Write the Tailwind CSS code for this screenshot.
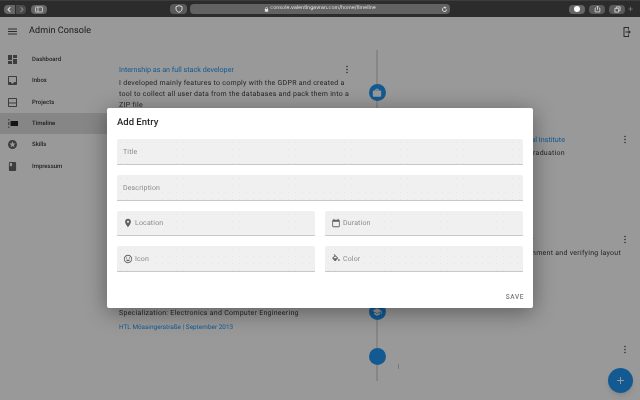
<!DOCTYPE html>
<html lang="en">
<head>
<meta charset="UTF-8">
<title>Admin Console</title>
<script src="https://cdn.jsdelivr.net/npm/@tailwindcss/browser@4"></script>
</head>
<body class="w-[640px] h-[400px] overflow-hidden bg-white font-['Roboto',sans-serif]">
<div class="relative w-[640px] h-[400px] overflow-hidden flex flex-col bg-white blur-[0.3px] [text-rendering:geometricPrecision]">

  <!-- Browser toolbar -->
  <div class="h-[17px] shrink-0 bg-[#2c2c2c] border-t border-[#3c3c3c] flex items-center text-[#d8d8d8]">
    <div class="ml-[4px] w-[11px] h-[9px] bg-[#666] rounded-l-sm flex items-center justify-center">
      <svg class="w-[7px] h-[7px]" viewBox="0 0 24 24" fill="none" stroke="currentColor" stroke-width="4"><path d="M15 4l-8 8 8 8"/></svg>
    </div>
    <div class="ml-px w-[10px] h-[9px] bg-[#4c4c4c] rounded-r-sm flex items-center justify-center text-[#888]">
      <svg class="w-[7px] h-[7px]" viewBox="0 0 24 24" fill="none" stroke="currentColor" stroke-width="4"><path d="M9 4l8 8-8 8"/></svg>
    </div>
    <div class="ml-[5px] w-[16px] h-[9px] bg-[#666] rounded-sm flex items-center justify-center">
      <svg class="w-[8px] h-[7px]" viewBox="0 0 16 12" fill="none" stroke="currentColor" stroke-width="1.6"><rect x="1" y="1" width="14" height="10" rx="1"/><path d="M6 1v10"/></svg>
    </div>
    <div class="ml-[123px] w-[17px] h-[10px] bg-[#5a5a5a] rounded-sm flex items-center justify-center">
      <svg class="w-[8px] h-[8px]" viewBox="0 0 24 24" fill="none" stroke="currentColor" stroke-width="3"><path d="M12 2l9 3v7c0 5-4 8-9 10-5-2-9-5-9-10V5z"/></svg>
    </div>
    <div class="relative ml-[3px] w-[260px] h-[10px] bg-[#626262] rounded-sm flex items-center justify-center text-[5.2px] text-[#e4e4e4] font-['Inter',sans-serif]">
      <svg class="w-[5px] h-[5px] mr-[1px]" viewBox="0 0 24 24" fill="currentColor"><path d="M6 10V7a6 6 0 0 1 12 0v3h2v13H4V10zm3 0h6V7a3 3 0 0 0-6 0z"/></svg>
      <span>console.valentingavran.com/home/timeline</span>
      <svg class="absolute right-[2px] w-[7px] h-[7px]" viewBox="0 0 24 24" fill="none" stroke="currentColor" stroke-width="3"><path d="M19 12a7 7 0 1 1-3-5.7M14 2l3 4-4 2"/></svg>
    </div>
    <div class="ml-[119px] w-[16px] h-[9px] bg-[#666] rounded-sm flex items-center justify-center">
      <div class="w-[6px] h-[6px] rounded-full bg-white"></div>
    </div>
    <div class="ml-[4px] w-[16px] h-[9px] bg-[#5a5a5a] rounded-sm flex items-center justify-center">
      <svg class="w-[7px] h-[8px]" viewBox="0 0 24 24" fill="none" stroke="currentColor" stroke-width="3"><path d="M7 9H4v13h16V9h-3M12 15V2M8 6l4-4 4 4"/></svg>
    </div>
    <div class="ml-[4px] w-[16px] h-[9px] bg-[#5a5a5a] rounded-sm flex items-center justify-center">
      <svg class="w-[7px] h-[7px]" viewBox="0 0 24 24" fill="none" stroke="currentColor" stroke-width="3"><path d="M8 8V3h13v13h-5M3 8h13v13H3z"/></svg>
    </div>
    <span class="ml-[3px] text-[9px] leading-none font-light text-[#999] mt-[3px]">+</span>
  </div>

  <!-- App header -->
  <header class="h-[32px] shrink-0 flex items-center pl-[8px] pr-[7px] pb-[3px] text-black/70">
    <svg class="w-[9px] h-[7px]" viewBox="0 0 18 12" fill="currentColor"><path d="M0 12h18v-2H0zm0-5h18V5H0zm0-7v2h18V0z"/></svg>
    <h1 class="ml-[12px] text-[9px] tracking-[0.1px] text-black/85">Admin Console</h1>
    <svg class="ml-auto w-[12px] h-[12px]" viewBox="0 0 24 24" fill="currentColor"><path d="M5 2h11v5h-2V4H7v16h7v-3h2v5H5zM15 7.5l4.5 4.5-4.5 4.5V13h-6v-2h6z"/></svg>
  </header>

  <div class="flex flex-1 min-h-0">
    <!-- Sidebar -->
    <nav class="w-[107px] shrink-0 text-[6px] font-medium text-black/80">
      <a class="flex items-center h-[21.33px] pl-[8px] gap-[15px]">
        <svg class="w-[9px] h-[9px] text-black/60" viewBox="3 3 18 18" fill="currentColor"><path d="M3 13h8V3H3v10zm0 8h8v-6H3v6zm10 0h8V11h-8v10zm0-18v6h8V3h-8z"/></svg>Dashboard
      </a>
      <a class="flex items-center h-[21.33px] pl-[8px] gap-[15px]">
        <svg class="w-[9px] h-[9px] text-black/60" viewBox="3 3 18 18" fill="currentColor"><path d="M19 3H4.99c-1.11 0-1.98.89-1.98 2L3 19c0 1.1.88 2 1.99 2H19c1.1 0 2-.9 2-2V5c0-1.11-.9-2-2-2zm0 12h-4c0 1.66-1.35 3-3 3s-3-1.34-3-3H4.99V5H19v10z"/></svg>Inbox
      </a>
      <a class="flex items-center h-[21.33px] pl-[8px] gap-[15px]">
        <svg class="w-[9px] h-[9px] text-black/60" viewBox="3 3 18 18" fill="currentColor"><path d="M19 3H5c-1.1 0-2 .9-2 2v14c0 1.1.9 2 2 2h14c1.1 0 2-.9 2-2V5c0-1.1-.9-2-2-2zm0 16H5v-5h14zm0-7H5V5h14z"/></svg>Projects
      </a>
      <a class="flex items-center h-[21.33px] pl-[8px] gap-[15px] bg-[#e0e0e0]">
        <svg class="w-[10px] h-[9px] text-black/85" viewBox="0 0 20 18" fill="currentColor"><path d="M5 4h15v10H5zM1 0h1.5v3H1zm0 6h1.5v6H1zm0 9h1.5v3H1z"/></svg><span class="-ml-px">Timeline</span>
      </a>
      <a class="flex items-center h-[21.33px] pl-[8px] gap-[15px]">
        <svg class="w-[9px] h-[9px] text-black/60" viewBox="2 2 20 20" fill="currentColor"><path d="M11.99 2C6.47 2 2 6.48 2 12s4.47 10 9.99 10C17.52 22 22 17.52 22 12S17.52 2 11.99 2zm4.24 16L12 15.45 7.77 18l1.12-4.81-3.73-3.23 4.92-.42L12 5l1.92 4.53 4.92.42-3.73 3.23L16.23 18z"/></svg>Skills
      </a>
      <a class="flex items-center h-[21.33px] pl-[8px] gap-[15px]">
        <svg class="w-[9px] h-[9px] text-black/60" viewBox="4 2 16 20" fill="currentColor"><path d="M18 2H6c-1.1 0-2 .9-2 2v16c0 1.1.9 2 2 2h12c1.1 0 2-.9 2-2V4c0-1.1-.9-2-2-2zM6 4h5v8l-2.5-1.5L6 12V4z"/></svg>Impressum
      </a>
    </nav>

    <!-- Timeline -->
    <main class="relative flex-1 pl-[12px] pt-[14px] text-[7px] leading-[11px] tracking-[0.27px] text-black/80">
      <div class="absolute left-[269px] top-[1px] w-[2px] h-[331px] bg-[#e0e0e0]"></div>

      <div class="relative grid grid-cols-[232px_52px_228px] h-[70px]">
        <div>
          <div class="flex justify-between items-center h-[13px]">
            <span class="text-[7.2px] text-[#2196f3] tracking-normal">Internship as an full stack developer</span>
            <svg class="w-[8px] h-[9px] text-black/70" viewBox="0 0 8 12" fill="currentColor"><circle cx="4" cy="2" r="1.1"/><circle cx="4" cy="6" r="1.1"/><circle cx="4" cy="10" r="1.1"/></svg>
          </div>
          <p class="mt-[2px] w-[240px]">I developed mainly features to comply with the GDPR and created a tool to collect all user data from the databases and pack them into a ZIP file</p>
        </div>
        <div class="flex justify-center pt-[21px]">
          <div class="w-[17px] h-[17px] rounded-full bg-[#2196f3] flex items-center justify-center text-white">
            <svg class="w-[10px] h-[10px]" viewBox="0 0 24 24" fill="currentColor"><path d="M20 6h-4V4c0-1.11-.89-2-2-2h-4c-1.11 0-2 .89-2 2v2H4c-1.11 0-1.99.89-1.99 2L2 19c0 1.11.89 2 2 2h16c1.11 0 2-.89 2-2V8c0-1.11-.89-2-2-2zm-6 0h-4V4h4v2z"/></svg>
          </div>
        </div>
      </div>

      <div class="relative grid grid-cols-[232px_52px_228px] h-[100px]">
        <div></div><div></div>
        <div>
          <div class="flex items-center h-[13px]">
            <span class="w-[162px] text-right text-[7.2px] text-[#2196f3] tracking-normal">Higher Technical Institute</span>
            <svg class="ml-auto w-[8px] h-[9px] text-black/70 mr-[2px]" viewBox="0 0 8 12" fill="currentColor"><circle cx="4" cy="2" r="1.1"/><circle cx="4" cy="6" r="1.1"/><circle cx="4" cy="10" r="1.1"/></svg>
          </div>
          <p class="mt-[2px] w-[162px] text-right">Graduation</p>
        </div>
      </div>

      <div class="relative grid grid-cols-[232px_52px_228px] h-[37px]">
        <div></div><div></div>
        <div>
          <div class="flex items-center h-[13px]">
            <span class="w-[131px] text-right text-[7.2px] text-[#2196f3] tracking-normal">Quality Engineer</span>
            <svg class="ml-auto w-[8px] h-[9px] text-black/70 mr-[2px]" viewBox="0 0 8 12" fill="currentColor"><circle cx="4" cy="2" r="1.1"/><circle cx="4" cy="6" r="1.1"/><circle cx="4" cy="10" r="1.1"/></svg>
          </div>
          <p class="mt-[2px] text-right pr-[10px] whitespace-nowrap">Assessing the alignment and verifying layout</p>
        </div>
      </div>

      <div class="relative grid grid-cols-[232px_52px_228px] h-[73px]">
        <div class="pt-[38px]">
          <p class="whitespace-nowrap">Specialization: Electronics and Computer Engineering</p>
          <p class="mt-[3px] text-[6.4px] tracking-[0.03px] text-[#2196f3] whitespace-nowrap">HTL Mössingerstraße | September 2013</p>
        </div>
        <div class="flex justify-center pt-[33px]">
          <div class="w-[17px] h-[17px] rounded-full bg-[#2196f3] flex items-center justify-center text-white">
            <svg class="w-[10px] h-[10px]" viewBox="0 0 24 24" fill="currentColor"><path d="M5 13.18v4L12 21l7-3.82v-4L12 17l-7-3.82zM12 3L1 9l11 6 9-4.91V17h2V9L12 3z"/></svg>
          </div>
        </div>
      </div>

      <div class="relative grid grid-cols-[232px_52px_228px] h-[50px]">
        <div></div>
        <div class="flex justify-center pt-[5px]">
          <div class="w-[17px] h-[17px] rounded-full bg-[#2196f3]"></div>
        </div>
        <div class="flex justify-between items-start pt-[2px]">
          <span class="mt-[19px] ml-[-5px] w-px h-[5px] bg-black/20"></span>
          <svg class="w-[8px] h-[9px] text-black/70 mr-[2px]" viewBox="0 0 8 12" fill="currentColor"><circle cx="4" cy="2" r="1.1"/><circle cx="4" cy="6" r="1.1"/><circle cx="4" cy="10" r="1.1"/></svg>
        </div>
      </div>
    </main>
  </div>

  <!-- FAB -->
  <button class="absolute left-[608px] top-[368px] w-[25px] h-[25px] rounded-full bg-[#2196f3] flex items-center justify-center text-white shadow-md">
    <svg class="w-[7px] h-[7px]" viewBox="0 0 14 14" fill="currentColor"><path d="M14 8H8v6H6V8H0V6h6V0h2v6h6z"/></svg>
  </button>

  <!-- Dialog backdrop -->
  <div class="absolute inset-x-0 bottom-0 top-[17px] bg-black/40"></div>

  <!-- Add Entry dialog -->
  <div class="absolute left-[107px] top-[108px] w-[426px] h-[200px] bg-white rounded-[2px] shadow-[0_4px_22px_rgba(0,0,0,0.4)] px-[10px] flex flex-col">
    <h2 class="mt-[8px] h-[14px] leading-[14px] text-[9.5px] font-medium text-black/85">Add Entry</h2>
    <div class="mt-[9.33px] flex flex-col gap-[10px] text-[7px] text-black/45 tracking-[0.15px]">
      <div class="h-[25.67px] pt-px bg-[#f0f0f0] bg-[radial-gradient(#e6e6e6_0.5px,transparent_0.7px)] bg-[length:7px_7px] border-b border-[#c8c8c8] rounded-t-[2px] flex items-center px-[6px]"><span class="bg-[#f0f0f0]">Title</span></div>
      <div class="h-[25.67px] pt-px bg-[#f0f0f0] bg-[radial-gradient(#e6e6e6_0.5px,transparent_0.7px)] bg-[length:7px_7px] border-b border-[#c8c8c8] rounded-t-[2px] flex items-center px-[6px]"><span class="bg-[#f0f0f0]">Description</span></div>
      <div class="grid grid-cols-2 gap-x-[10px] gap-y-[10px]">
        <div class="h-[25.67px] pt-px bg-[#f0f0f0] bg-[radial-gradient(#e6e6e6_0.5px,transparent_0.7px)] bg-[length:7px_7px] border-b border-[#c8c8c8] rounded-t-[2px] flex items-center px-[6px] gap-[2px]">
          <svg class="w-[10px] h-[10px] text-black/60" viewBox="0 0 24 24" fill="currentColor"><path d="M12 2C8.13 2 5 5.13 5 9c0 5.25 7 13 7 13s7-7.75 7-13c0-3.87-3.13-7-7-7zm0 9.5c-1.38 0-2.5-1.12-2.5-2.5s1.12-2.5 2.5-2.5 2.5 1.12 2.5 2.5-1.12 2.5-2.5 2.5z"/></svg><span class="bg-[#f0f0f0]">Location</span>
        </div>
        <div class="h-[25.67px] pt-px bg-[#f0f0f0] bg-[radial-gradient(#e6e6e6_0.5px,transparent_0.7px)] bg-[length:7px_7px] border-b border-[#c8c8c8] rounded-t-[2px] flex items-center px-[6px] gap-[2px]">
          <svg class="w-[10px] h-[10px] text-black/60" viewBox="0 0 24 24" fill="currentColor"><path d="M19 4h-1V2h-2v2H8V2H6v2H5c-1.11 0-1.99.9-1.99 2L3 20c0 1.1.89 2 2 2h14c1.1 0 2-.9 2-2V6c0-1.1-.9-2-2-2zm0 16H5V9h14v11z"/></svg><span class="bg-[#f0f0f0]">Duration</span>
        </div>
        <div class="h-[25.67px] pt-px bg-[#f0f0f0] bg-[radial-gradient(#e6e6e6_0.5px,transparent_0.7px)] bg-[length:7px_7px] border-b border-[#c8c8c8] rounded-t-[2px] flex items-center px-[6px] gap-[2px]">
          <svg class="w-[10px] h-[10px] text-black/60" viewBox="0 0 24 24" fill="currentColor"><path d="M11.99 2C6.47 2 2 6.48 2 12s4.47 10 9.99 10C17.52 22 22 17.52 22 12S17.52 2 11.99 2zM12 20c-4.42 0-8-3.58-8-8s3.58-8 8-8 8 3.58 8 8-3.58 8-8 8zm3.5-9c.83 0 1.5-.67 1.5-1.5S16.33 8 15.5 8 14 8.67 14 9.5s.67 1.5 1.5 1.5zm-7 0c.83 0 1.5-.67 1.5-1.5S9.33 8 8.5 8 7 8.67 7 9.5 7.67 11 8.5 11zm3.5 6.5c2.33 0 4.31-1.46 5.11-3.5H6.89c.8 2.04 2.78 3.5 5.11 3.5z"/></svg><span class="bg-[#f0f0f0]">Icon</span>
        </div>
        <div class="h-[25.67px] pt-px bg-[#f0f0f0] bg-[radial-gradient(#e6e6e6_0.5px,transparent_0.7px)] bg-[length:7px_7px] border-b border-[#c8c8c8] rounded-t-[2px] flex items-center px-[6px] gap-[2px]">
          <svg class="w-[10px] h-[10px] text-black/60" viewBox="0 0 24 24" fill="currentColor"><path d="M16.56 8.94L7.62 0 6.21 1.41l2.38 2.38-5.15 5.15c-.59.59-.59 1.54 0 2.12l5.5 5.5c.29.29.68.44 1.06.44s.77-.15 1.06-.44l5.5-5.5c.59-.58.59-1.53 0-2.12zM5.21 10L10 5.21 14.79 10H5.21zM19 11.5s-2 2.17-2 3.5c0 1.1.9 2 2 2s2-.9 2-2c0-1.33-2-3.5-2-3.5z"/></svg><span class="bg-[#f0f0f0]">Color</span>
        </div>
      </div>
    </div>
    <div class="mt-auto mb-[7px] flex justify-end">
      <button class="text-[6.5px] leading-[8px] font-medium tracking-[0.6px] text-black/55 mr-[-1px]">SAVE</button>
    </div>
  </div>
</div>
</body>
</html>
